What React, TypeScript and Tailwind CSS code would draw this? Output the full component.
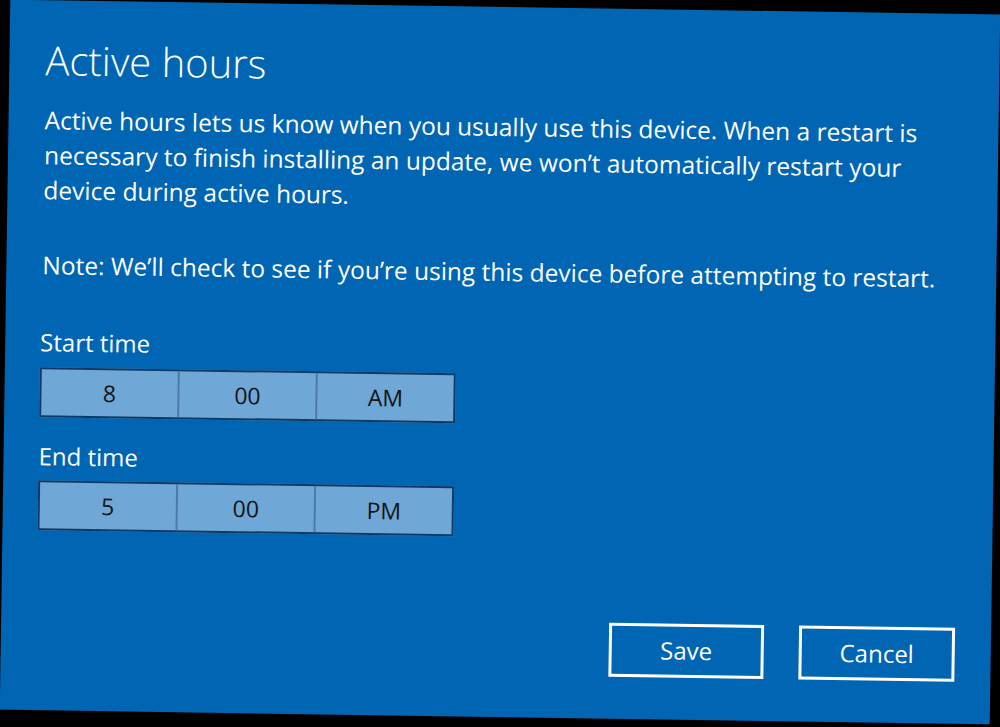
const font = { fontFamily: '"Open Sans", "Noto Sans", "Liberation Sans", sans-serif' };

function TimePicker({ parts }: { parts: string[] }) {
  return (
    <div className="flex w-[416px] h-[50px] border-2 border-[#103a66] bg-[#6fa7d7] -ml-[1px]">
      {parts.map((p, i) => (
        <div
          key={i}
          className={`flex-1 flex items-center justify-center text-[23px] text-[#141414] ${
            i > 0 ? "border-l-2 border-[#4c7ba6]" : ""
          }`}
        >
          {p}
        </div>
      ))}
    </div>
  );
}

export default function App() {
  return (
    <div className="w-[1000px] h-[727px] bg-black overflow-hidden pt-[7px] pl-[5px]" style={font}>
      <div className="w-[990px] h-[710px] bg-[#0066b4] rotate-[0.85deg] flex flex-col px-[36px] pt-[36px] pb-[42px] text-white">
        <h1 className="text-[40px] leading-[48px] font-light">Active hours</h1>

        <p className="mt-[18px] text-[24.5px] leading-[35px] whitespace-nowrap">
          Active hours lets us know when you usually use this device. When a restart is
          <br />
          necessary to finish installing an update, we won’t automatically restart your
          <br />
          device during active hours.
        </p>

        <p className="mt-[40px] text-[24.5px] leading-[35px] whitespace-nowrap">
          Note: We’ll check to see if you’re using this device before attempting to restart.
        </p>

        <div className="mt-[45px] text-[24px] leading-[30px] -ml-[1px]">Start time</div>
        <div className="mt-[10px]">
          <TimePicker parts={["8", "00", "AM"]} />
        </div>

        <div className="mt-[24px] text-[24px] leading-[30px] -ml-[1px]">End time</div>
        <div className="mt-[9px]">
          <TimePicker parts={["5", "00", "PM"]} />
        </div>

        <div className="mt-auto flex justify-end gap-[35px]">
          <button className="w-[155px] h-[54px] border-[3px] border-white text-[24px] text-white">
            Save
          </button>
          <button className="w-[156px] h-[54px] border-[3px] border-white text-[24px] text-white">
            Cancel
          </button>
        </div>
      </div>
    </div>
  );
}
